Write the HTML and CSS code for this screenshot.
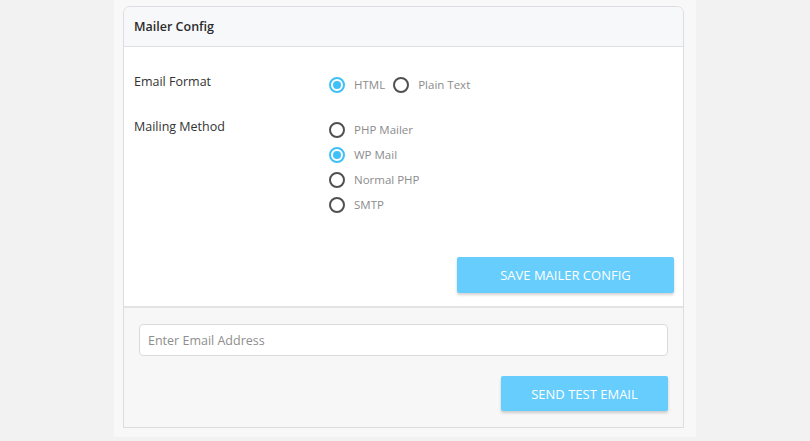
FILE: index.html
```html
<!DOCTYPE html>
<html lang="en">
<head>
<meta charset="utf-8">
<title>Mailer Config</title>
<link rel="stylesheet" href="styles.css">
</head>
<body>
<div class="wrap">
  <div class="card">
    <div class="card-head">Mailer Config</div>
    <div class="card-body">
      <div class="row">
        <div class="label">Email Format</div>
        <div class="opts opts-inline">
          <label class="opt"><span class="radio checked"></span>HTML</label>
          <label class="opt"><span class="radio"></span>Plain Text</label>
        </div>
      </div>
      <div class="row">
        <div class="label">Mailing Method</div>
        <div class="opts">
          <label class="opt"><span class="radio"></span>PHP Mailer</label>
          <label class="opt"><span class="radio checked"></span>WP Mail</label>
          <label class="opt"><span class="radio"></span>Normal PHP</label>
          <label class="opt"><span class="radio"></span>SMTP</label>
        </div>
      </div>
      <div class="actions">
        <button class="btn btn-save">SAVE MAILER CONFIG</button>
      </div>
    </div>
    <div class="card-foot">
      <input class="email" type="text" placeholder="Enter Email Address">
      <div class="actions actions-foot">
        <button class="btn btn-send">SEND TEST EMAIL</button>
      </div>
    </div>
  </div>
</div>
</body>
</html>
```

FILE: styles.css
```css
* { box-sizing: border-box; }

html, body {
  margin: 0;
  padding: 0;
  background: #f2f2f2;
  font-family: "Open Sans", "Noto Sans", sans-serif;
  color: #333;
}

.wrap {
  margin-left: 114px;
  width: 582px;
  height: 437px;
  padding: 6px 12px 0 9px;
  background: #f8f8f8;
}

.card {
  border: 1px solid #dcdde0;
  border-radius: 7px 7px 0 0;
  background: #fff;
}

.card-head {
  height: 40px;
  padding-left: 10px;
  display: flex;
  align-items: center;
  font-size: 12.5px;
  font-weight: 600;
  color: #2b2b2b;
  background: #f7f8fa;
  border-bottom: 1px solid #dfe0e3;
  border-radius: 7px 7px 0 0;
}

.card-body {
  padding: 25px 9px 13px 10px;
}

.row {
  display: grid;
  grid-template-columns: 195px 1fr;
  margin-bottom: 20px;
}

.label {
  font-size: 12.5px;
  line-height: 20px;
  color: #333;
}

.opts {
  display: flex;
  flex-direction: column;
}

.opts-inline {
  flex-direction: row;
  gap: 8px;
}

.opt {
  display: flex;
  align-items: center;
  height: 25px;
  font-size: 11.5px;
  color: #8c8c8c;
}

.radio {
  width: 16px;
  height: 16px;
  border: 2px solid #505050;
  border-radius: 50%;
  margin-right: 9px;
  flex: none;
  position: relative;
}

.radio.checked {
  border-color: #3fc0f8;
}

.radio.checked::after {
  content: "";
  position: absolute;
  left: 2px;
  top: 2px;
  width: 8px;
  height: 8px;
  border-radius: 50%;
  background: #3fc0f8;
}

.actions {
  display: flex;
  justify-content: flex-end;
  padding-top: 20px;
}

.btn {
  border: 0;
  background: #66cdfd;
  color: #fff;
  font-family: inherit;
  font-size: 13px;
  font-weight: 500;
  border-radius: 2px;
  box-shadow: 0 2px 3px rgba(0, 0, 0, 0.18);
}

.btn-save {
  width: 217px;
  height: 36px;
}

.card-foot {
  background: #f7f7f7;
  border-top: 2px solid #e3e3e3;
  padding: 16px 15px 15px 15px;
  height: 121px;
}

.email {
  display: block;
  width: 100%;
  height: 32px;
  border: 1px solid #dadada;
  border-radius: 4px;
  background: #fff;
  padding: 0 8px;
  font-family: inherit;
  font-size: 12.5px;
  color: #333;
}

.email::placeholder {
  color: #8e8e8e;
}

.actions-foot {
  padding-top: 20px;
}

.btn-send {
  width: 167px;
  height: 35px;
}
```
